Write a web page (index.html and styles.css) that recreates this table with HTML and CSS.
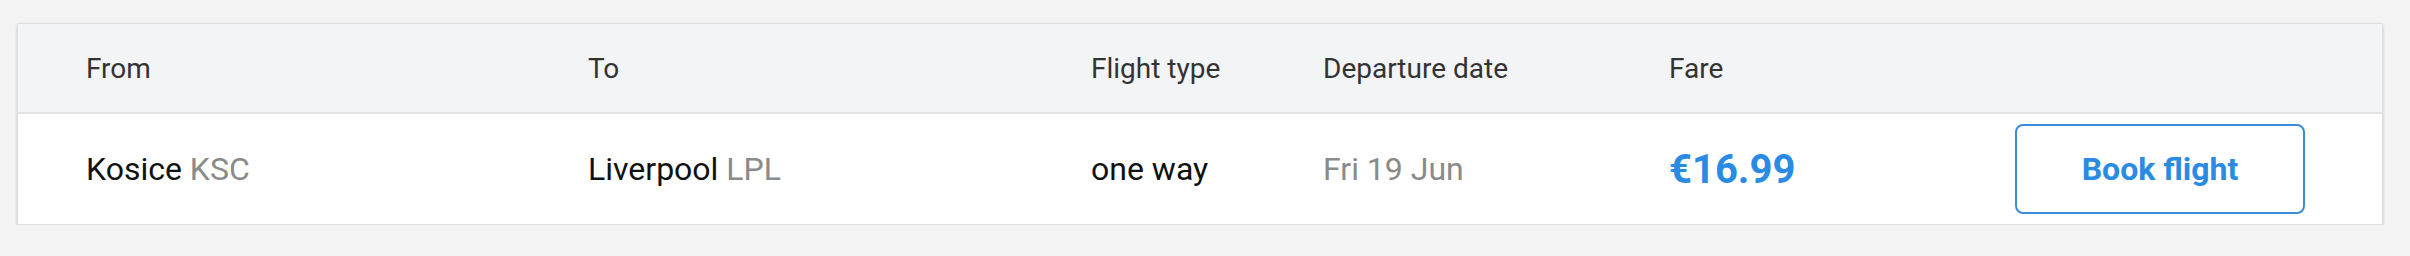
FILE: index.html
```html
<!DOCTYPE html>
<html lang="en">

<head>
  <meta charset="UTF-8">
  <title>Flights</title>
  <link rel="stylesheet" href="styles.css">
</head>

<body>
  <div class="page">
    <div class="flights">
      <div class="row head">
        <div>From</div>
        <div>To</div>
        <div>Flight type</div>
        <div>Departure date</div>
        <div>Fare</div>
        <div></div>
      </div>
      <div class="row">
        <div>Kosice <span class="code">KSC</span></div>
        <div>Liverpool <span class="code">LPL</span></div>
        <div>one way</div>
        <div class="date">Fri 19 Jun</div>
        <div class="fare">€16.99</div>
        <div><button type="button" class="btn-book">Book flight</button></div>
      </div>
    </div>
  </div>
</body>

</html>
```

FILE: styles.css
```css
body {
  margin: 0;
  background-color: #f3f3f3;
  font-family: Roboto, "Liberation Sans", Arial, sans-serif;
}

.page {
  padding: 23px 27px 0 17px;
}

.flights {
  background-color: #fff;
  border: 1px solid #e0e0e0;
  box-shadow: 0 2px 3px rgba(0, 0, 0, 0.2);
}

.row {
  display: grid;
  grid-template-columns: 502px 503px 232px 346px 1fr 290px;
  align-items: center;
  padding: 0 77px 0 68px;
  height: 110px;
  font-size: 32px;
  color: #111;
}

.row.head {
  height: 88px;
  background-color: #f3f4f6;
  border-bottom: 2px solid #e2e3e5;
  font-size: 28px;
  color: #333;
}

.code,
.date {
  color: #8a8a8a;
}

.fare {
  font-size: 40px;
  font-weight: bold;
  color: #2a8be2;
}

.btn-book {
  width: 290px;
  height: 90px;
  background-color: #fff;
  border: 2px solid #3a8bd8;
  border-radius: 8px;
  font-family: inherit;
  font-size: 32px;
  font-weight: bold;
  color: #2a8be2;
  cursor: pointer;
}
```
